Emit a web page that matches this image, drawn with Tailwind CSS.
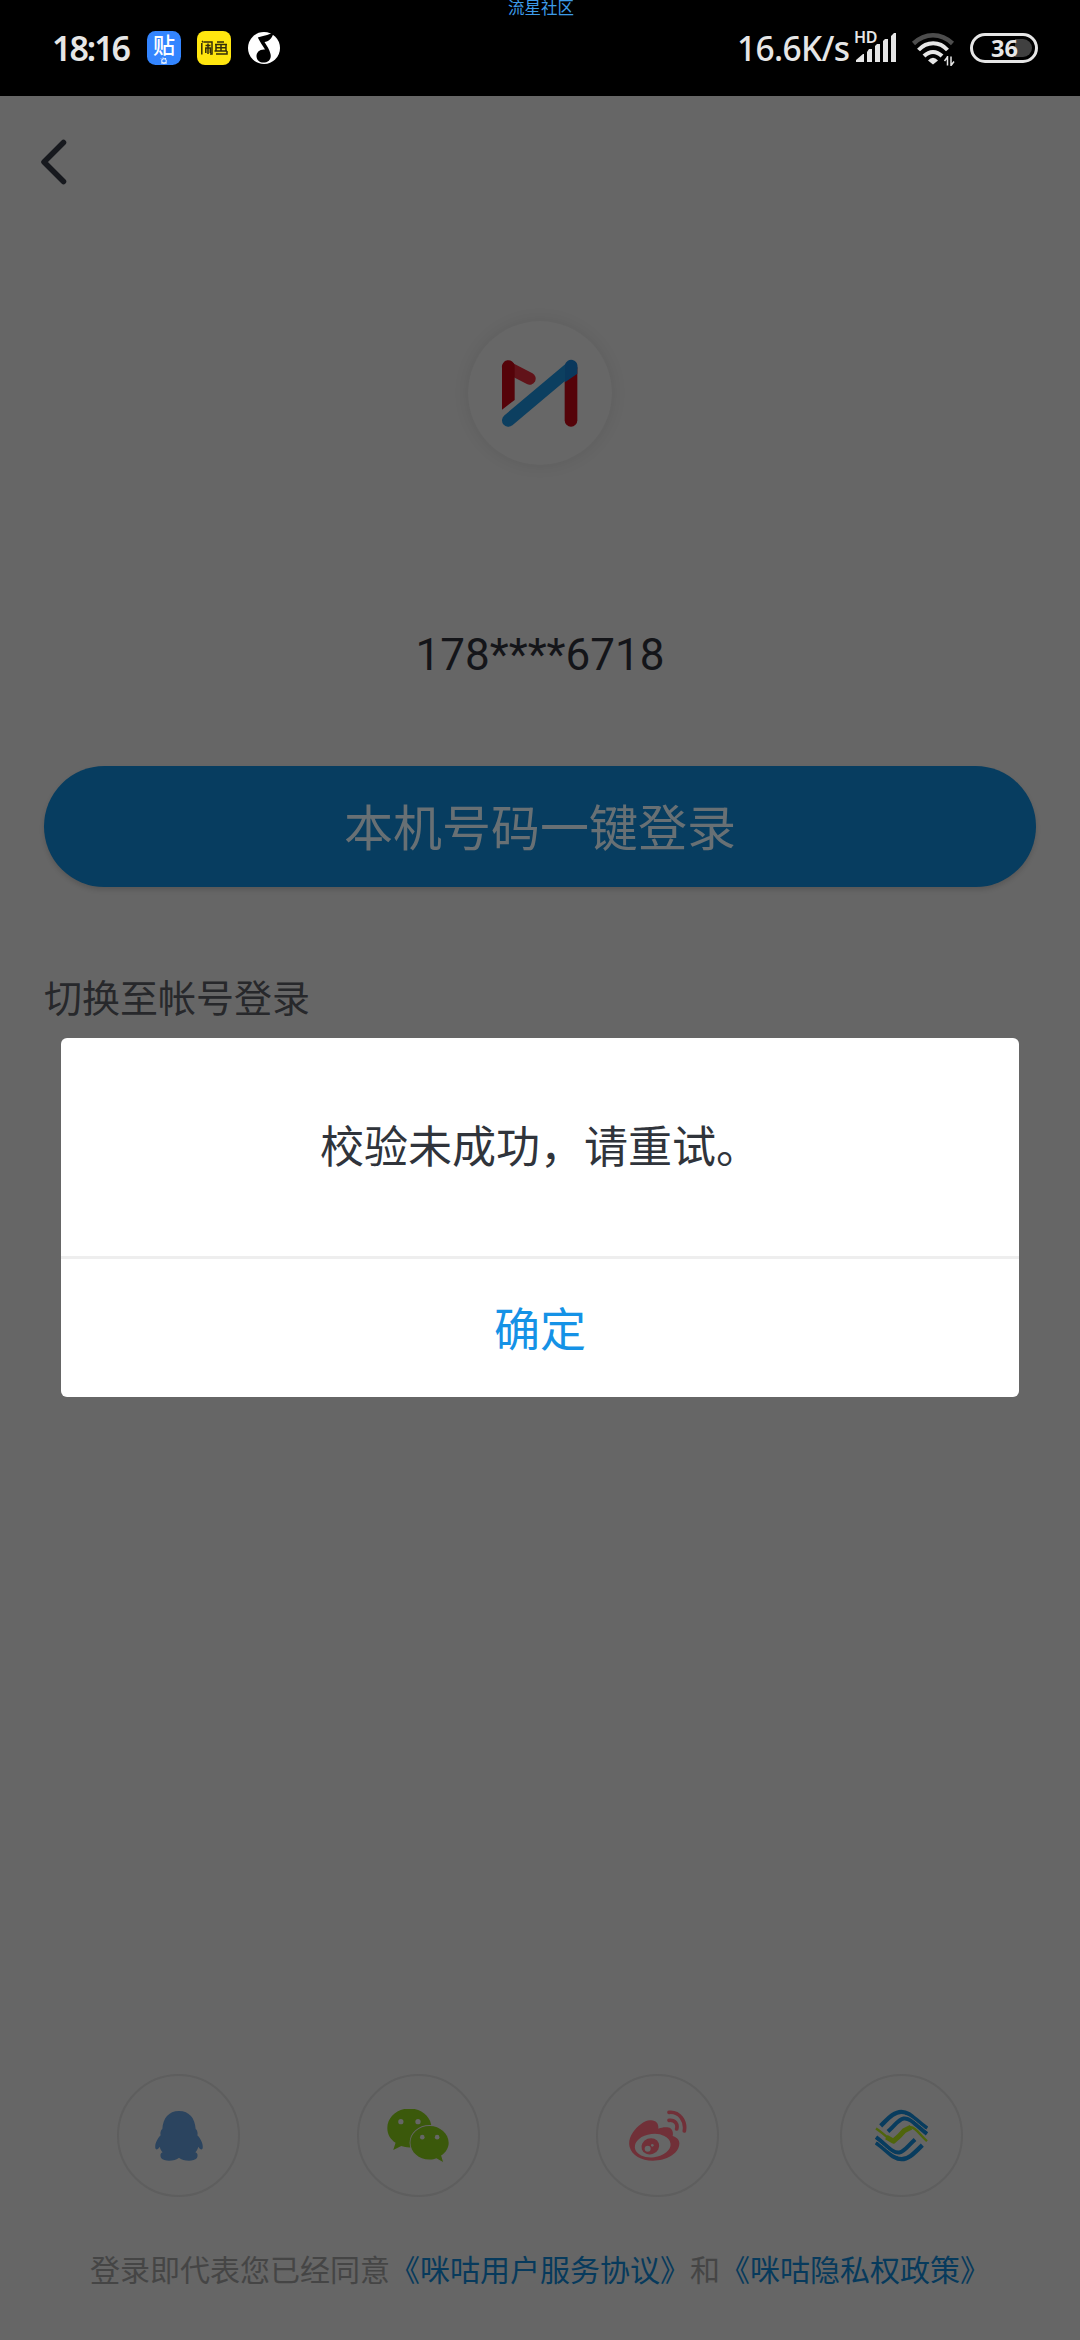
<!DOCTYPE html>
<html lang="zh-CN">
<head>
<meta charset="utf-8">
<title>登录</title>
<script src="https://cdn.jsdelivr.net/npm/@tailwindcss/browser@4"></script>
</head>
<body class="bg-[#666666] font-['Roboto','Noto_Sans_CJK_SC',sans-serif]">
<div class="relative flex h-[2340px] w-[1080px] flex-col overflow-hidden bg-[#666666]">

  <!-- Status bar -->
  <header class="relative flex h-24 shrink-0 items-center bg-black pl-[53px] text-[#e6e6e6]">
    <span class="absolute left-[508px] top-0 text-[16.5px] leading-[17px] text-[#3d9be8]">流星社区</span>
    <svg class="h-24 w-[1027px] shrink-0" viewBox="53 0 1027 96">
      <g font-family="Noto Sans" font-weight="600" fill="#e6e6e6">
        <text x="52" y="61" font-size="34" textLength="79">18:16</text>
        <text x="737" y="60.5" font-size="33.5" font-weight="500" textLength="113">16.6K/s</text>
        <text x="854" y="43" font-size="16" textLength="23.5">HD</text>
      </g>
      <rect x="147" y="31" width="34" height="34" rx="8.500" fill="#3385ff"/>
      <text x="153" y="53" font-size="22" font-weight="500" font-family="Noto Sans CJK SC" fill="#fff">贴</text>
      <g fill="none" stroke="#fff" stroke-width="1"><circle cx="164" cy="61" r="2.300"/><path d="M161 58.500l1 1M163 57.500v1M166 58l-.8 1M161 63h6"/></g>
      <rect x="197" y="31" width="34" height="34" rx="8" fill="#ffe60f"/>
      <g fill="none" stroke="#332d0a" stroke-width="1.500">
        <path d="M201.800 43v11.500M204 42h8v12h-2M205.500 45.500h5M208 43.500v10.500M205.800 53v-5h4.500v5M202 41l1.500 1.500"/>
        <path d="M217 42h7M215 44.500h12M216 44.500v6.500h10v-6.500M216 47.800h10M221 44.500v6.500M214.500 51h12.500M216 54h11v-3"/>
      </g>
      <circle cx="264" cy="48" r="16" fill="#fff"/>
      <path d="M273 32.500C268 35.500 262 36 257.800 37.500 260 42 263 46 265 49.500 259.500 49 256.300 52.500 256.500 56.500 257 61 260.500 63 264.500 62.500 269.500 62 271.500 58 270.500 54 269.500 49.500 267 46 264.500 42 268.500 42 272 38.500 273.500 33z" fill="#000"/>
      <!-- Signal strength -->
      <path d="M856 62v-2l7-6h1v8zM867 62V52l2-3h3v13zM875 62V46l2-2h3v18zM883 62V41l2-2h3v23zM891 62V36l3-3h2v29z" fill="#e6e6e6"/>
      <!-- Wi-Fi -->
      <g fill="none" stroke-width="4">
        <path d="M913.500 43.500C925 32.500 941 32.500 952.500 43.500" stroke="#4d4d4d" stroke-width="4.500"/>
        <path d="M918.500 50C927 41 939.500 41 947.500 50" stroke="#e6e6e6"/>
        <path d="M924 56C929.500 50.500 936.500 50.500 942 56" stroke="#e6e6e6"/>
      </g>
      <path d="M928 60.500Q933 55 938 60.500L933 64.500z" fill="#e6e6e6"/>
      <path d="M947.500 56v9.500M951 66v-9.500M947.500 57l-3 4M951 65.500l3-4" fill="none" stroke="#e6e6e6" stroke-width="1.500"/>
      <!-- Battery -->
      <path d="M1015 39h8a9 9 0 0 1 0 18h-8z" fill="#404040"/>
      <rect x="971.500" y="34.500" width="65" height="27" rx="13.500" fill="none" stroke="#e6e6e6" stroke-width="3"/>
      <text x="991" y="57" font-size="23.500" font-family="Noto Sans" font-weight="700" textLength="27" fill="#e6e6e6">36</text>
    </svg>
  </header>

  <!-- Navigation -->
  <nav class="flex h-[132px] shrink-0 items-center pl-9">
    <svg class="h-12 w-9" viewBox="0 0 36 48" fill="none" stroke="#17191e" stroke-width="5.500" stroke-linecap="round" stroke-linejoin="round"><path d="M27.500 4.500L8 24 27.500 43.500"/></svg>
  </nav>

  <main class="flex grow flex-col px-11">
    <div class="mt-[93px] size-36 self-center rounded-full bg-[#676767] shadow-[0_0_16px_rgba(0,0,0,0.09)]">
      <svg class="size-36" viewBox="84 91 432 432">
        <path d="M205 231L269 264" stroke="#611319" stroke-width="36" stroke-linecap="round"/>
        <path d="M186 357V231a19 19 0 0 1 38-6V328z" fill="#550309"/>
        <path d="M393 231V389" stroke="#550309" stroke-width="38" stroke-linecap="round"/>
        <path d="M205 389L393 231" stroke="#0c3f60" stroke-width="38" stroke-linecap="round"/>
        <path d="M375 222a19 19 0 0 1 37 9v18L375 275z" fill="#0a385c"/>
      </svg>
    </div>

    <p class="mt-[164px] text-center text-[44px] leading-[52px] text-[#141519]">178****6718</p>

    <button class="mt-[85px] h-[121px] rounded-full bg-[#073d60] pt-[5px] text-[49px] leading-none text-[#687074] shadow-[0_3px_5px_rgba(0,0,0,0.14)]">本机号码一键登录</button>

    <a class="mt-[84px] text-[38px] leading-14 text-[#27282b]">切换至帐号登录</a>

    <!-- Third-party login -->
    <section class="mt-auto flex justify-between px-[73px]">
      <div class="flex size-[123px] items-center justify-center rounded-full border-2 border-[#5e5e5e]">
        <svg class="h-[50px] w-[48px]" viewBox="193 180 144 150" fill="#2b445f">
          <path d="M265 180c-31 0-48 22-50 54-5 4-7 12-5 19-9 9-18 25-16 38 2 8 8 4 13-4 2 8 5 13 9 17-8 3-8 11-4 18 8 10 42 9 53-2 11 11 45 12 53 2 4-7 4-15-4-18 4-4 7-9 9-17 5 8 11 12 13 4 2-13-7-29-16-38 2-7 0-15-5-19-2-32-19-54-50-54z"/>
        </svg>
      </div>
      <div class="flex size-[123px] items-center justify-center rounded-full border-2 border-[#5e5e5e]">
        <svg class="h-[54px] w-[62px]" viewBox="890 173 188 163">
          <path d="M958 171c-37 0-67 26-67 59 0 19 9 34 25 45l-7 22 24-12c8 3 17 4 25 4 37 0 67-26 67-59s-30-59-67-59z" fill="#3b590b"/>
          <path d="M1019 224c-33 0-58 23-58 51s25 51 58 51c8 0 15-1 21-4l20 11-6-19c14-9 23-23 23-39 0-28-26-51-58-51z" fill="#3b590b" stroke="#666" stroke-width="5" paint-order="stroke"/>
          <g fill="#666"><circle cx="932" cy="211" r="8"/><circle cx="984" cy="211" r="8"/><circle cx="997" cy="258" r="7"/><circle cx="1042" cy="258" r="7"/></g>
        </svg>
      </div>
      <div class="flex size-[123px] items-center justify-center rounded-full border-2 border-[#5e5e5e]">
        <svg class="h-[51px] w-[58px]" viewBox="147 178 174 153">
          <path d="M213 209c-18-2-42 18-54 36-10 15-14 30-10 44 7 25 35 41 69 41 41 0 78-21 80-50 1-12-7-20-20-24 3-14-3-25-16-26-10-1-18 1-27 4 1-14-5-24-22-25z" fill="#713038"/>
          <ellipse cx="218" cy="285" rx="54" ry="35" transform="rotate(-7 218 285)" fill="#666"/>
          <ellipse cx="211" cy="287" rx="27" ry="24" transform="rotate(-20 211 287)" fill="#713038"/>
          <circle cx="203" cy="294" r="9" fill="#666"/><circle cx="217" cy="284" r="4" fill="#666"/>
          <path d="M267 185c32-3 51 26 46 56M267 209c19-2 27 12 23 26" fill="none" stroke="#713038" stroke-width="11" stroke-linecap="round"/>
        </svg>
      </div>
      <div class="ml-[4px] flex size-[123px] items-center justify-center rounded-full border-2 border-[#5e5e5e]">
        <svg class="h-[53px] w-[53px]" viewBox="886 176 159 158" fill="none">
          <g stroke="#083c5e">
            <path d="M903 226C926 204 943 184 965 184c27 0 39 24 77 50" stroke-width="13"/>
            <path d="M925 243C947 223 956 207 972 204 994 201 1009 226 1042 250" stroke-width="12"/>
          </g>
          <path d="M889 234C912 248 930 272 941 271 957 269 974 234 991 230 1005 227 1019 251 1042 272" stroke="#4f650b" stroke-width="7"/>
          <path d="M920 260L941 272Q959 258 973 241L994 230" stroke="#4f650b" stroke-width="15" stroke-linejoin="round"/>
          <g stroke="#083c5e" transform="rotate(180 965.500 255)">
            <path d="M903 226C926 204 943 184 965 184c27 0 39 24 77 50" stroke-width="13"/>
            <path d="M925 243C947 223 956 207 972 204 994 201 1009 226 1042 250" stroke-width="12"/>
          </g>
          <path d="M909 235C945 203 959 192 972 194 995 196 1014 221 1044 242M1022 275C986 307 972 318 959 316 936 314 917 289 887 268" stroke="#666" stroke-width="3"/>
        </svg>
      </div>
    </section>

    <p class="mb-[47px] mt-[52px] whitespace-nowrap text-center text-[30px] leading-11 text-[#454545]">登录即代表您已经同意<span class="text-[#073a5c]">《咪咕用户服务协议》</span>和<span class="text-[#073a5c]">《咪咕隐私权政策》</span></p>
  </main>

  <!-- Dialog -->
  <div role="dialog" class="absolute left-[61px] top-[1038px] flex h-[359px] w-[958px] flex-col rounded-md bg-white">
    <p class="flex h-[218px] items-center justify-center pt-0.5 text-[44px] text-[#30343b]">校验未成功，请重试。</p>
    <button class="grow border-t-3 border-[#eeeeee] pt-1 text-[46px] leading-none text-[#1592e6]">确定</button>
  </div>
</div>
</body>
</html>
